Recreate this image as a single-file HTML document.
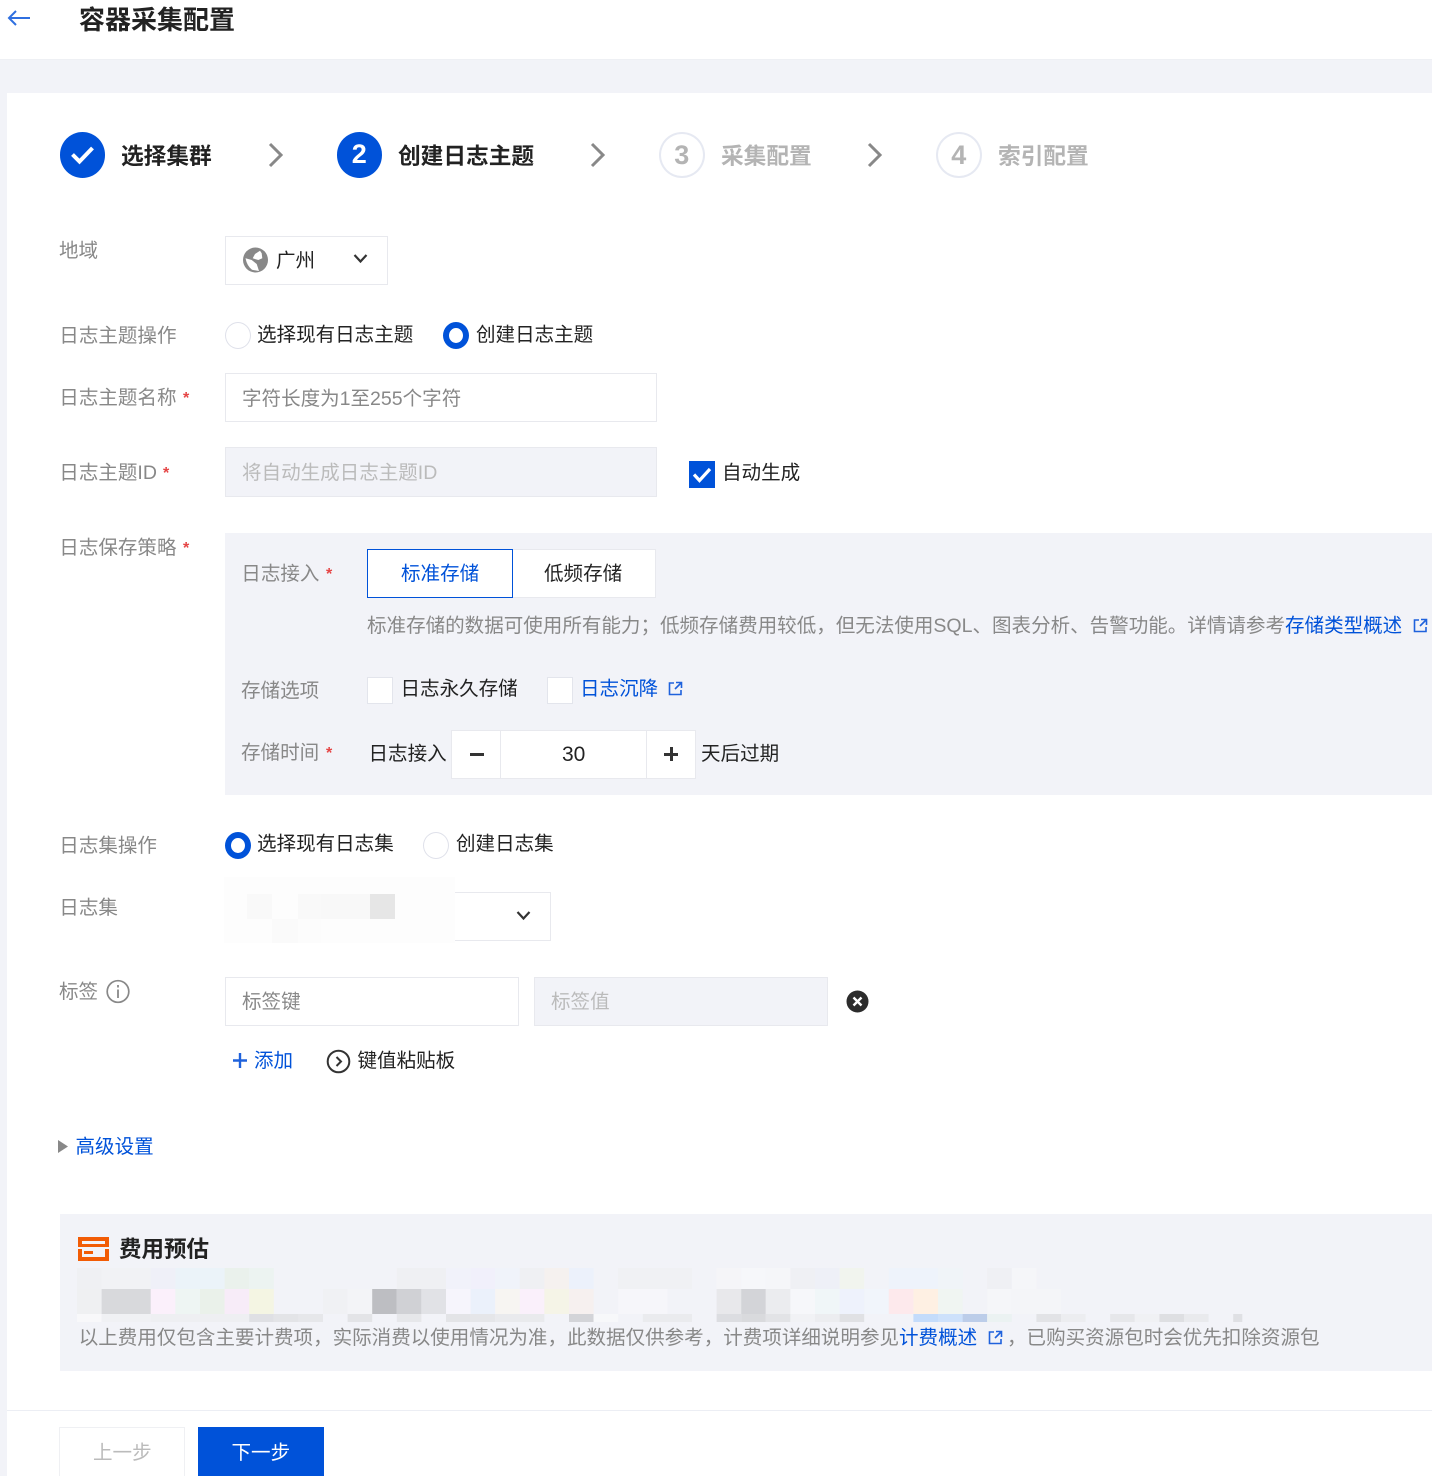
<!DOCTYPE html>
<html lang="zh-CN"><head><meta charset="utf-8"><title>容器采集配置</title>
<style>
html,body{margin:0;padding:0;background:#fff}
#p{position:relative;width:1432px;height:1476px;overflow:hidden;background:#f2f3f8;font-family:"Liberation Sans","Noto Sans CJK SC",sans-serif;font-size:19.55px;color:#222}
#p div,#p span.a,#p a,#p svg{position:absolute}
.t{white-space:nowrap;line-height:30px;height:30px;margin-top:1px}
.l{color:#888}.b{color:#0052d9;text-decoration:none}.g{color:#888}.d{color:#bbb}
.s{font-weight:700;font-size:22.7px}
.st{color:#e54545;font-size:16px;font-weight:700}
.box{box-sizing:border-box;border:1px solid #e8e9ee;background:#fff}
.dis{background:#f2f3f8}
.c{box-sizing:border-box;border-radius:50%;width:26px;height:27px}
.r0{border:1px solid #dfe1ea;background:#fff}
.r1{border:6.5px solid #0052d9;background:#fff}
.cb{box-sizing:border-box;width:26px;height:27px;border:1px solid #e3e5ec;background:#fff}
.n{box-sizing:border-box;border-radius:50%;width:45.5px;height:46px;top:132px;text-align:center;line-height:44px;font-size:27px;font-weight:700}
</style></head><body><div id="p">

<div style="left:0;top:0;width:1432px;height:60px;background:#fff;border-bottom:1px solid #eef0f4;box-sizing:border-box"></div>
<div style="left:7px;top:93px;width:1425px;height:1383px;background:#fff"></div>

<svg style="left:6px;top:8px" width="26" height="20" viewBox="0 0 26 20"><path d="M3 10H24M10 3L3 10L10 17" fill="none" stroke="#2f6fe0" stroke-width="2"/></svg>
<div class="t" style="left:79px;top:5px;font-size:26px;font-weight:700;color:#222;margin-top:0">容器采集配置</div>

<!-- steps -->
<div class="n" style="left:59.500px;background:#0052d9"></div>
<svg style="left:60px;top:132px" width="45" height="46"><path d="M12.500 22.500L19.500 29.500L32.500 16" fill="none" stroke="#fff" stroke-width="4"/></svg>
<div class="t s" style="left:121px;top:140px">选择集群</div>
<svg style="left:265px;top:142px" width="20" height="26"><path d="M5 2L16 13L5 24" fill="none" stroke="#888" stroke-width="3"/></svg>
<div class="n" style="left:336.500px;background:#0052d9;color:#fff">2</div>
<div class="t s" style="left:398px;top:140px">创建日志主题</div>
<svg style="left:587px;top:142px" width="20" height="26"><path d="M5 2L16 13L5 24" fill="none" stroke="#888" stroke-width="3"/></svg>
<div class="n" style="left:659px;border:2px solid #e6e9f2;color:#b4b4b4;line-height:42px">3</div>
<div class="t s" style="left:721px;top:140px;color:#b4b4b4">采集配置</div>
<svg style="left:864px;top:142px" width="20" height="26"><path d="M5 2L16 13L5 24" fill="none" stroke="#888" stroke-width="3"/></svg>
<div class="n" style="left:936px;border:2px solid #e6e9f2;color:#b4b4b4;line-height:42px">4</div>
<div class="t s" style="left:998px;top:140px;color:#b4b4b4">索引配置</div>

<!-- region -->
<div class="t l" style="left:59px;top:235px">地域</div>
<div class="box" style="left:225px;top:236px;width:163px;height:49px"></div>
<svg style="left:242px;top:246px" width="27" height="28" viewBox="0 0 27 28"><circle cx="13.500" cy="14" r="12.500" fill="#888"/><path d="M3.500 12.300L9.700 14L14.700 18L17 25L10 23.800Q5 20 3.500 12.300ZM18 4.700L13 8L10.700 12.300L16.300 14L20.300 12.300L19.700 7.300Z" fill="#fff"/></svg>
<div class="t" style="left:276px;top:245px">广州</div>
<svg style="left:352px;top:252px" width="18" height="14"><path d="M2.500 3L8.500 9.500L14.500 3" fill="none" stroke="#333" stroke-width="2.200"/></svg>

<div class="t l" style="left:59.300px;top:321px;margin-top:0">日志主题操作</div>
<div class="c r0" style="left:225px;top:322px"></div>
<div class="t" style="left:257px;top:319px">选择现有日志主题</div>
<div class="c r1" style="left:443px;top:322px"></div>
<div class="t" style="left:476px;top:319px">创建日志主题</div>

<div class="t l" style="left:59.300px;top:382px">日志主题名称</div><div class="t st" style="left:183px;top:383px">*</div>
<div class="box" style="left:225px;top:373px;width:432px;height:49px"></div>
<div class="t g" style="left:242px;top:383px">字符长度为1至255个字符</div>

<div class="t l" style="left:59.300px;top:457px">日志主题ID</div><div class="t st" style="left:163px;top:458px">*</div>
<div class="box dis" style="left:225px;top:447px;width:432px;height:50px"></div>
<div class="t d" style="left:242px;top:457px">将自动生成日志主题ID</div>
<div class="cb" style="left:689px;top:461px;background:#0052d9;border:0"></div>
<svg style="left:689px;top:461px" width="26" height="27"><path d="M5 13.500L10.500 19.500L21 8" fill="none" stroke="#fff" stroke-width="3.200"/></svg>
<div class="t" style="left:722px;top:457px">自动生成</div>

<!-- storage panel -->
<div class="t l" style="left:59.300px;top:532px">日志保存策略</div><div class="t st" style="left:183px;top:533px">*</div>
<div style="left:225px;top:533px;width:1207px;height:262px;background:#f2f3f8"></div>
<div class="t l" style="left:241.300px;top:558px">日志接入</div><div class="t st" style="left:326px;top:559px">*</div>
<div style="left:367px;top:549px;width:146px;height:49px;box-sizing:border-box;border:1px solid #0052d9;background:#fff"></div>
<div class="t b" style="left:401px;top:558px">标准存储</div>
<div class="box" style="left:513px;top:549px;width:143px;height:49px;border-left:0"></div>
<div class="t" style="left:544px;top:558px">低频存储</div>
<div class="t g" style="left:367px;top:610px">标准存储的数据可使用所有能力；低频存储费用较低，但无法使用SQL、图表分析、告警功能。详情请参考<a class="b" style="position:static">存储类型概述</a></div>
<svg style="left:1413px;top:618px" width="15" height="15" viewBox="0 0 15 15"><path d="M6 2H1.500V13.500H13V9M8 1.500H13.500V7M13.500 1.500L7 8" fill="none" stroke="#1f62dc" stroke-width="1.600"/></svg>

<div class="t l" style="left:241px;top:675px">存储选项</div>
<div class="cb" style="left:367px;top:677px"></div>
<div class="t" style="left:400.500px;top:673px">日志永久存储</div>
<div class="cb" style="left:547px;top:677px"></div>
<div class="t b" style="left:580px;top:673px">日志沉降</div>
<svg style="left:668px;top:681px" width="15" height="15" viewBox="0 0 15 15"><path d="M6 2H1.500V13.500H13V9M8 1.500H13.500V7M13.500 1.500L7 8" fill="none" stroke="#1f62dc" stroke-width="1.600"/></svg>

<div class="t l" style="left:241px;top:737px">存储时间</div><div class="t st" style="left:326px;top:738px">*</div>
<div class="t" style="left:368.500px;top:738px">日志接入</div>
<div class="box" style="left:451px;top:730px;width:245px;height:49px"></div>
<div style="left:500px;top:731px;width:1px;height:47px;background:#e8e9ee"></div>
<div style="left:646px;top:731px;width:1px;height:47px;background:#e8e9ee"></div>
<div style="left:470px;top:753px;width:14px;height:2.500px;background:#333"></div>
<div style="left:664px;top:753px;width:14px;height:2.500px;background:#333"></div>
<div style="left:670px;top:747px;width:2.500px;height:14px;background:#333"></div>
<div class="t" style="left:562px;top:740px;font-size:21px;margin-top:0">30</div>
<div class="t" style="left:701px;top:738px">天后过期</div>

<!-- logset -->
<div class="t l" style="left:59.300px;top:830px">日志集操作</div>
<div class="c r1" style="left:225px;top:832px"></div>
<div class="t" style="left:257px;top:828px">选择现有日志集</div>
<div class="c r0" style="left:423px;top:832px"></div>
<div class="t" style="left:456px;top:828px">创建日志集</div>

<div class="t l" style="left:59.300px;top:892px">日志集</div>
<div class="box" style="left:300px;top:892px;width:251px;height:49px"></div>
<div style="left:224px;top:877px;width:231px;height:66px;background:#fdfdfd"></div>
<div style="left:247px;top:894px;width:25px;height:25px;background:#f9f9f9"></div>
<div style="left:298px;top:894px;width:23px;height:25px;background:#f9f9f9"></div>
<div style="left:321px;top:894px;width:49px;height:25px;background:#f8f8f8"></div>
<div style="left:370px;top:894px;width:25px;height:25px;background:#e6e6e6"></div>
<div style="left:272px;top:919px;width:26px;height:24px;background:#fafafa"></div>
<div style="left:298px;top:919px;width:23px;height:24px;background:#fcfcfc"></div>
<svg style="left:515px;top:909px" width="18" height="14"><path d="M2.500 3L8.500 9.500L14.500 3" fill="none" stroke="#333" stroke-width="2.200"/></svg>

<!-- tags -->
<div class="t l" style="left:59px;top:976px">标签</div>
<svg style="left:106px;top:979px" width="24" height="25" viewBox="0 0 24 25"><circle cx="12" cy="12.500" r="10.800" fill="none" stroke="#888" stroke-width="1.700"/><path d="M12 10.500V19M12 6V8.500" stroke="#888" stroke-width="1.800"/></svg>
<div class="box" style="left:225px;top:977px;width:294px;height:49px"></div>
<div class="t g" style="left:242px;top:986px">标签键</div>
<div class="box dis" style="left:534px;top:977px;width:294px;height:49px"></div>
<div class="t d" style="left:551px;top:986px">标签值</div>
<svg style="left:846px;top:990px" width="23" height="23" viewBox="0 0 23 23"><circle cx="11.500" cy="11.500" r="11" fill="#2c2c2c"/><path d="M7.500 7.500L15.500 15.500M15.500 7.500L7.500 15.500" stroke="#fff" stroke-width="2.400"/></svg>

<svg style="left:232px;top:1052px" width="16" height="17"><path d="M8 1V16M1 8.500H15" stroke="#1f62dc" stroke-width="2.400"/></svg>
<div class="t b" style="left:254px;top:1045px">添加</div>
<svg style="left:326px;top:1049px" width="25" height="25" viewBox="0 0 25 25"><circle cx="12.500" cy="12.500" r="10.800" fill="none" stroke="#333" stroke-width="2"/><path d="M10.500 8L15 12.500L10.500 17" fill="none" stroke="#333" stroke-width="2"/></svg>
<div class="t" style="left:357.500px;top:1045px">键值粘贴板</div>

<svg style="left:57px;top:1139px" width="12" height="15"><path d="M1 1L11 7.500L1 14Z" fill="#888"/></svg>
<div class="t b" style="left:75.500px;top:1131px">高级设置</div>

<!-- cost panel -->
<div style="left:59.500px;top:1214px;width:1373px;height:157px;background:#f2f3f8"></div>
<svg style="left:78px;top:1237px" width="31" height="24" viewBox="0 0 31 24"><path fill-rule="evenodd" d="M0 0H31V10H0ZM4 4V7H27V4ZM0 12H4V20H27V12H31V24H0ZM6 14H15V17H6Z" fill="#f25c05"/></svg>
<div class="t" style="left:119px;top:1234px;font-size:22.500px;font-weight:700">费用预估</div>

<svg style="left:0;top:0" width="1432" height="1476">
<g transform="translate(77 1268) scale(24.6 1)">
<rect x="0" width="1" height="21" fill="#eff0f3"/><rect x="1" width="2" height="21" fill="#f1f2f5"/><rect x="3" width="1" height="21" fill="#eff0f8"/><rect x="4" width="2" height="21" fill="#ebf3f9"/><rect x="6" width="1" height="21" fill="#eaf1ec"/><rect x="7" width="1" height="21" fill="#ecf3f1"/><rect x="13" width="2" height="21" fill="#eff0f3"/><rect x="15" width="1" height="21" fill="#f1f2fa"/><rect x="16" width="1" height="21" fill="#f1f0fb"/><rect x="17" width="1" height="21" fill="#f0f3fa"/><rect x="18" width="1" height="21" fill="#eff0f3"/><rect x="19" width="1" height="21" fill="#f5f1ef"/><rect x="20" width="1" height="21" fill="#ecf1fb"/><rect x="22" width="3" height="21" fill="#f0f1f4"/><rect x="26" width="1" height="21" fill="#f5f5f8"/><rect x="27" width="1" height="21" fill="#f6f7fa"/><rect x="28" width="1" height="21" fill="#f5f6f9"/><rect x="29" width="1" height="21" fill="#eff0f4"/><rect x="30" width="1" height="21" fill="#eef0f7"/><rect x="31" width="1" height="21" fill="#f1f4ee"/><rect x="33" width="2" height="21" fill="#eef3fb"/><rect x="35" width="1" height="21" fill="#f0f4f8"/><rect x="37" width="1" height="21" fill="#eff0f4"/><rect x="38" width="1" height="21" fill="#f5f6f9"/>
</g>
<g transform="translate(77 1289) scale(24.6 1)">
<rect x="0" width="1" height="25" fill="#eff0f2"/><rect x="1" width="2" height="25" fill="#d8d9dc"/><rect x="3" width="1" height="25" fill="#fbf0fb"/><rect x="4" width="1" height="25" fill="#eef5f3"/><rect x="5" width="1" height="25" fill="#eaf1ea"/><rect x="6" width="1" height="25" fill="#f7ecf8"/><rect x="7" width="1" height="25" fill="#f4f5e3"/><rect x="10" width="1" height="25" fill="#f0f1f4"/><rect x="11" width="1" height="25" fill="#f3f4f7"/><rect x="12" width="1" height="25" fill="#bdbec2"/><rect x="13" width="1" height="25" fill="#d0d1d5"/><rect x="14" width="1" height="25" fill="#e1e2e6"/><rect x="15" width="1" height="25" fill="#f6f5fc"/><rect x="16" width="1" height="25" fill="#ebf1fb"/><rect x="17" width="1" height="25" fill="#f7f5f2"/><rect x="18" width="1" height="25" fill="#faf0fb"/><rect x="19" width="1" height="25" fill="#f5f4e7"/><rect x="20" width="1" height="25" fill="#f6f0ef"/><rect x="22" width="2" height="25" fill="#f6f6fa"/><rect x="26" width="1" height="25" fill="#e8e8eb"/><rect x="27" width="1" height="25" fill="#d3d4d8"/><rect x="28" width="1" height="25" fill="#ebecef"/><rect x="29" width="1" height="25" fill="#f6f7fa"/><rect x="30" width="1" height="25" fill="#f0f6f8"/><rect x="31" width="1" height="25" fill="#eef2fc"/><rect x="32" width="1" height="25" fill="#f1f5fb"/><rect x="33" width="1" height="25" fill="#fde9ec"/><rect x="34" width="1" height="25" fill="#fef0e3"/><rect x="35" width="1" height="25" fill="#f0f5f2"/><rect x="37" width="1" height="25" fill="#f5f6f9"/><rect x="38" width="2" height="25" fill="#f4f5f8"/>
</g>
<g transform="translate(77 1314) scale(24.6 1)">
<rect x="0" width="1" height="8" fill="#f8f8fa"/><rect x="1" width="2" height="8" fill="#f0f1f4"/><rect x="3" width="4" height="8" fill="#eeeff2"/><rect x="7" width="1" height="8" fill="#dfe0e4"/><rect x="8" width="1" height="8" fill="#e3e4e7"/><rect x="9" width="1" height="8" fill="#e6e7ea"/><rect x="11" width="1" height="8" fill="#e3e4e7"/><rect x="13" width="1" height="8" fill="#e6e7ea"/><rect x="15" width="1" height="8" fill="#e3e4e7"/><rect x="16" width="1" height="8" fill="#e5e6e9"/><rect x="17" width="2" height="8" fill="#e9eaed"/><rect x="20" width="1" height="8" fill="#d3d4d8"/><rect x="21" width="1" height="8" fill="#f7f8fa"/><rect x="23" width="2" height="8" fill="#eaebee"/><rect x="26" width="1" height="8" fill="#dcdde1"/><rect x="27" width="1" height="8" fill="#d9dadd"/><rect x="28" width="1" height="8" fill="#e2e3e6"/><rect x="29" width="1" height="8" fill="#f1f2f5"/><rect x="30" width="1" height="8" fill="#ecedf0"/><rect x="31" width="1" height="8" fill="#e0e1e4"/><rect x="34" width="1" height="8" fill="#c4dcfb"/><rect x="35" width="1" height="8" fill="#cde1fb"/><rect x="36" width="1" height="8" fill="#bccde9"/><rect x="37" width="1" height="8" fill="#ebf2f2"/><rect x="39" width="1" height="8" fill="#e2e3e6"/><rect x="40" width="1" height="8" fill="#ecedf0"/><rect x="42" width="1" height="8" fill="#e6e7ea"/><rect x="43" width="1" height="8" fill="#f0f1f4"/><rect x="44" width="1" height="8" fill="#dedfe2"/><rect x="45" width="1" height="8" fill="#e9eaed"/><rect x="47" width="0.37" height="8" fill="#dfe0e4"/>
</g>
</svg>

<div class="t g" style="left:78.700px;top:1322px">以上费用仅包含主要计费项，实际消费以使用情况为准，此数据仅供参考，计费项详细说明参见<a class="b" style="position:static">计费概述</a></div>
<svg style="left:988px;top:1330px" width="15" height="15" viewBox="0 0 15 15"><path d="M6 2H1.500V13.500H13V9M8 1.500H13.500V7M13.500 1.500L7 8" fill="none" stroke="#1f62dc" stroke-width="1.600"/></svg>
<div class="t g" style="left:1007px;top:1322px">，已购买资源包时会优先扣除资源包</div>

<!-- footer -->
<div style="left:7px;top:1410px;width:1425px;height:1px;background:#eceef4"></div>
<div class="box" style="left:59px;top:1427px;width:126px;height:60px;border-color:#eff0f3"></div>
<div class="t d" style="left:93px;top:1437px">上一步</div>
<div style="left:198px;top:1427px;width:126px;height:49px;background:#0052d9"></div>
<div class="t" style="left:231.500px;top:1437px;color:#fff">下一步</div>

</div></body></html>
